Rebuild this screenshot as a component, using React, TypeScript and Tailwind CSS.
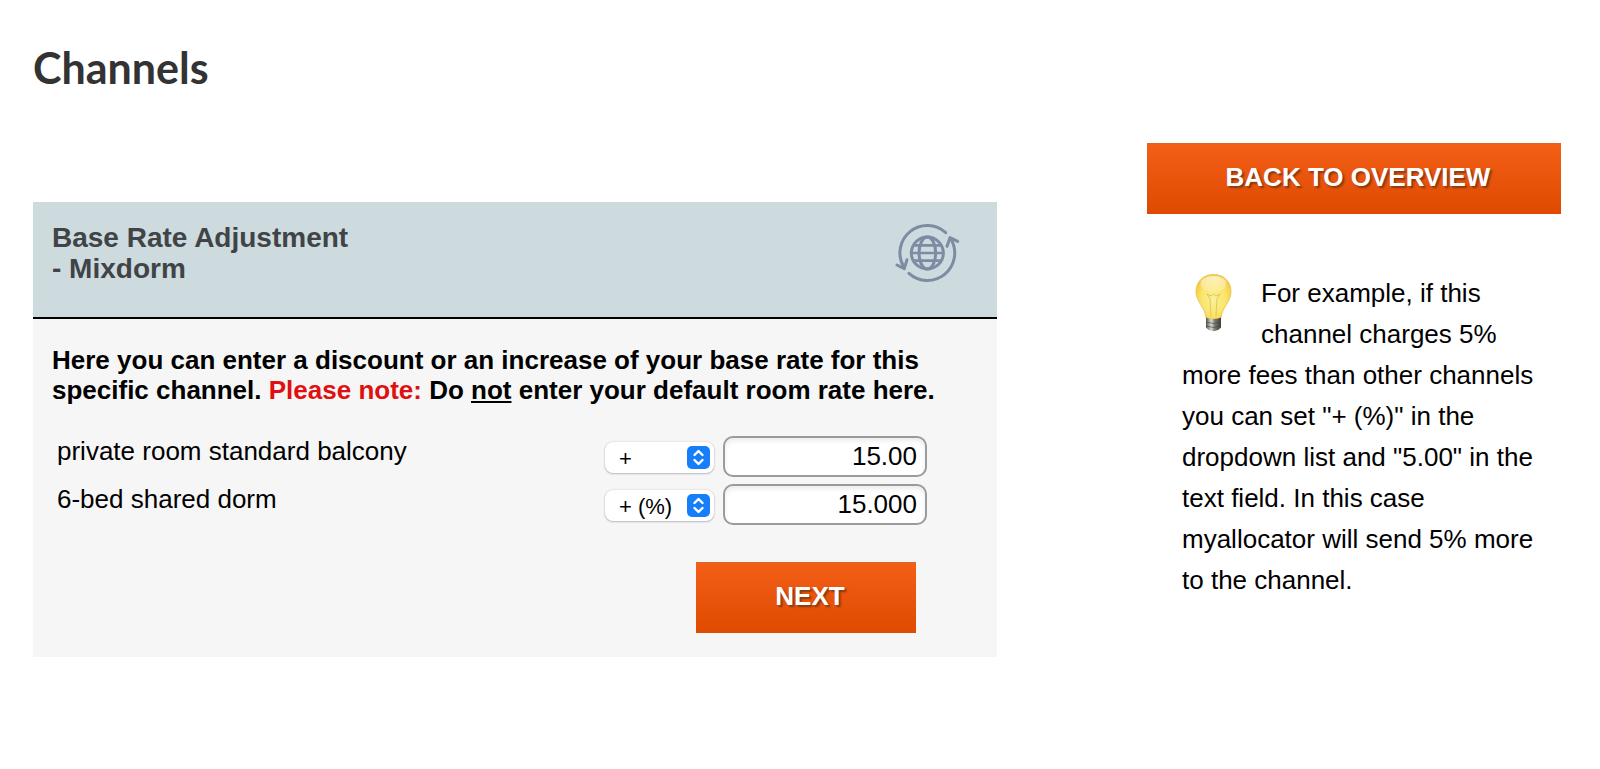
import { useState } from 'react'

const MODES = ['+', '-', '+ (%)', '- (%)']

const ROOMS = [
  { id: 'private', name: 'private room standard balcony', mode: '+', value: '15.00' },
  { id: 'dorm', name: '6-bed shared dorm', mode: '+ (%)', value: '15.000' },
]

const BUTTON =
  'block h-[71px] border-t border-[#d9662c] bg-gradient-to-b from-[#f45f17] to-[#df4a00] pb-[3px] pl-2 text-center text-[26px] leading-[67px] font-bold text-white uppercase [text-shadow:2px_2px_2px_rgba(70,40,20,0.6)]'

function GlobeSync() {
  return (
    <svg className="h-[62px] w-[68px] shrink-0" viewBox="0 0 204 186" fill="none" stroke="#7d8ba3" strokeWidth="9" aria-hidden="true">
      <circle cx="103" cy="93" r="48" />
      <ellipse cx="103" cy="93" rx="25" ry="48" />
      <path d="M63 70h80M56 93h94M63 116h80" strokeWidth="8" />
      <g strokeLinecap="round" strokeLinejoin="round">
        <path d="M158 32A82 82 0 0 0 32 134" />
        <path d="M12 129l22 11 8-27" />
        <path d="M48 154A82 82 0 0 0 174 52" />
        <path d="M162 73l9-26 23 11" />
      </g>
    </svg>
  )
}

function Bulb() {
  return (
    <svg className="float-left mr-7 ml-3 h-[60px] w-[39px]" viewBox="0 0 39 60" aria-hidden="true">
      <defs>
        <radialGradient id="glass" cx="0.5" cy="0.55" r="0.6">
          <stop offset="0" stopColor="#fbf09a" />
          <stop offset="0.6" stopColor="#fbe469" />
          <stop offset="1" stopColor="#f0c636" />
        </radialGradient>
        <linearGradient id="shine" x1="0" y1="0" x2="0" y2="1">
          <stop offset="0" stopColor="#fff" stopOpacity="0.65" />
          <stop offset="1" stopColor="#fff" stopOpacity="0.15" />
        </linearGradient>
        <linearGradient id="metal">
          <stop offset="0" stopColor="#55534c" />
          <stop offset="0.35" stopColor="#d8d8d4" />
          <stop offset="0.6" stopColor="#77756f" />
          <stop offset="1" stopColor="#3f3d38" />
        </linearGradient>
      </defs>
      <path d="M19.500 1.500C9 1.500 2 9 2 18.500c0 10 9 16 10 26q7.500 3.500 15 0c1-10 10-16 10-26C37 9 30 1.500 19.500 1.500z" fill="url(#glass)" stroke="#e9ca57" />
      <ellipse cx="19.500" cy="11" rx="13" ry="8" fill="url(#shine)" />
      <path d="M17 43l-1-17-3-5 4 2 2.500-2 2.500 2 4-2-3 5-1 17" fill="none" stroke="#cdbb4c" strokeOpacity="0.7" />
      <path d="M12 44.500q7.500 3 15 0v10q-2 2.500-5 3-2.500 1.500-5 0-3-.5-5-3z" fill="url(#metal)" />
      <path d="M12 49q7.500 3 15 0M12 53q7.500 3 15 0" fill="none" stroke="#45433e" strokeOpacity="0.6" />
    </svg>
  )
}

export default function App() {
  const [rooms, setRooms] = useState(ROOMS)

  function update(id: string, change: { mode?: string; value?: string }) {
    setRooms(rooms.map(r => (r.id === id ? { ...r, ...change } : r)))
  }

  return (
    <div className="min-h-screen bg-white pr-[39px] pl-[33px] font-['Liberation_Sans',Arial,sans-serif] text-[26px] text-black">
      <div className="flex items-start gap-[150px]">
        <main className="min-w-0 flex-1 pt-10">
          <h1 className="font-[Lato,sans-serif] text-[43px] leading-[56px] font-bold text-[#333]">Channels</h1>

          <section className="mt-[106px] bg-[#f6f6f6]">
            <header className="flex h-[117px] items-start justify-between border-b-2 border-black bg-[#cddade] pt-5 pr-9 pl-[19px]">
              <h2 className="text-[28px] leading-[31px] font-bold text-[#404446]">
                Base Rate Adjustment
                <br />- Mixdorm
              </h2>
              <GlobeSync />
            </header>

            <form className="pt-[26px] pb-6 pl-[19px]" onSubmit={e => e.preventDefault()}>
              <p className="pr-12 leading-[30px] font-bold">
                Here you can enter a discount or an increase of your base rate for this specific channel.{' '}
                <span className="text-[#e01010]">Please note:</span> Do <u className="decoration-2 underline-offset-2">not</u> enter your default room rate here.
              </p>

              <table className="mt-[27px] w-full">
                <tbody>
                  {rooms.map(room => (
                    <tr key={room.id} className="h-12">
                      <th scope="row" className="pb-[9px] pl-[5px] text-left font-normal">
                        <label htmlFor={`${room.id}-value`}>{room.name}</label>
                      </th>
                      <td className="w-[118px]">
                        <div className="relative mt-[3px] w-[109px]">
                          <select
                            aria-label={`Adjustment type for ${room.name}`}
                            className="block h-[31px] w-full appearance-none rounded-lg bg-white pl-[14px] text-[22px] shadow-[0_0_2px_rgba(0,0,0,0.2),0_1px_2px_rgba(0,0,0,0.2)]"
                            value={room.mode}
                            onChange={e => update(room.id, { mode: e.target.value })}
                          >
                            {MODES.map(m => <option key={m}>{m}</option>)}
                          </select>
                          <svg className="pointer-events-none absolute top-1 right-1 h-[23px] w-[23px]" viewBox="0 0 23 23" aria-hidden="true">
                            <rect width="23" height="23" rx="5" fill="#167ef8" />
                            <path d="M7.500 9l4-4 4 4M7.500 14l4 4 4-4" fill="none" stroke="#fff" strokeWidth="2.400" strokeLinecap="round" strokeLinejoin="round" />
                          </svg>
                        </div>
                      </td>
                      <td className="w-[274px]">
                        <input
                          id={`${room.id}-value`}
                          type="text"
                          className="block h-[41px] w-[204px] rounded-[10px] border-2 border-[#9b9b9b] bg-white pr-2 text-right shadow-[inset_0_3px_5px_rgba(0,0,0,0.08)]"
                          value={room.value}
                          onChange={e => update(room.id, { value: e.target.value })}
                        />
                      </td>
                    </tr>
                  ))}
                </tbody>
              </table>

              <button type="submit" className={`${BUTTON} mt-[34px] mr-[81px] ml-auto w-[220px]`}>Next</button>
            </form>
          </section>
        </main>

        <aside className="w-[414px] shrink-0 pt-[143px]">
          <a href="#overview" className={BUTTON}>Back to overview</a>
          <div className="mt-[59px] pr-5 pl-[35px] leading-[41px]">
            <Bulb />
            <p>
              For example, if this channel charges 5% more fees than other channels you can set "+ (%)" in the dropdown
              list and "5.00" in the text field. In this case myallocator will send 5% more to the channel.
            </p>
          </div>
        </aside>
      </div>
    </div>
  )
}
